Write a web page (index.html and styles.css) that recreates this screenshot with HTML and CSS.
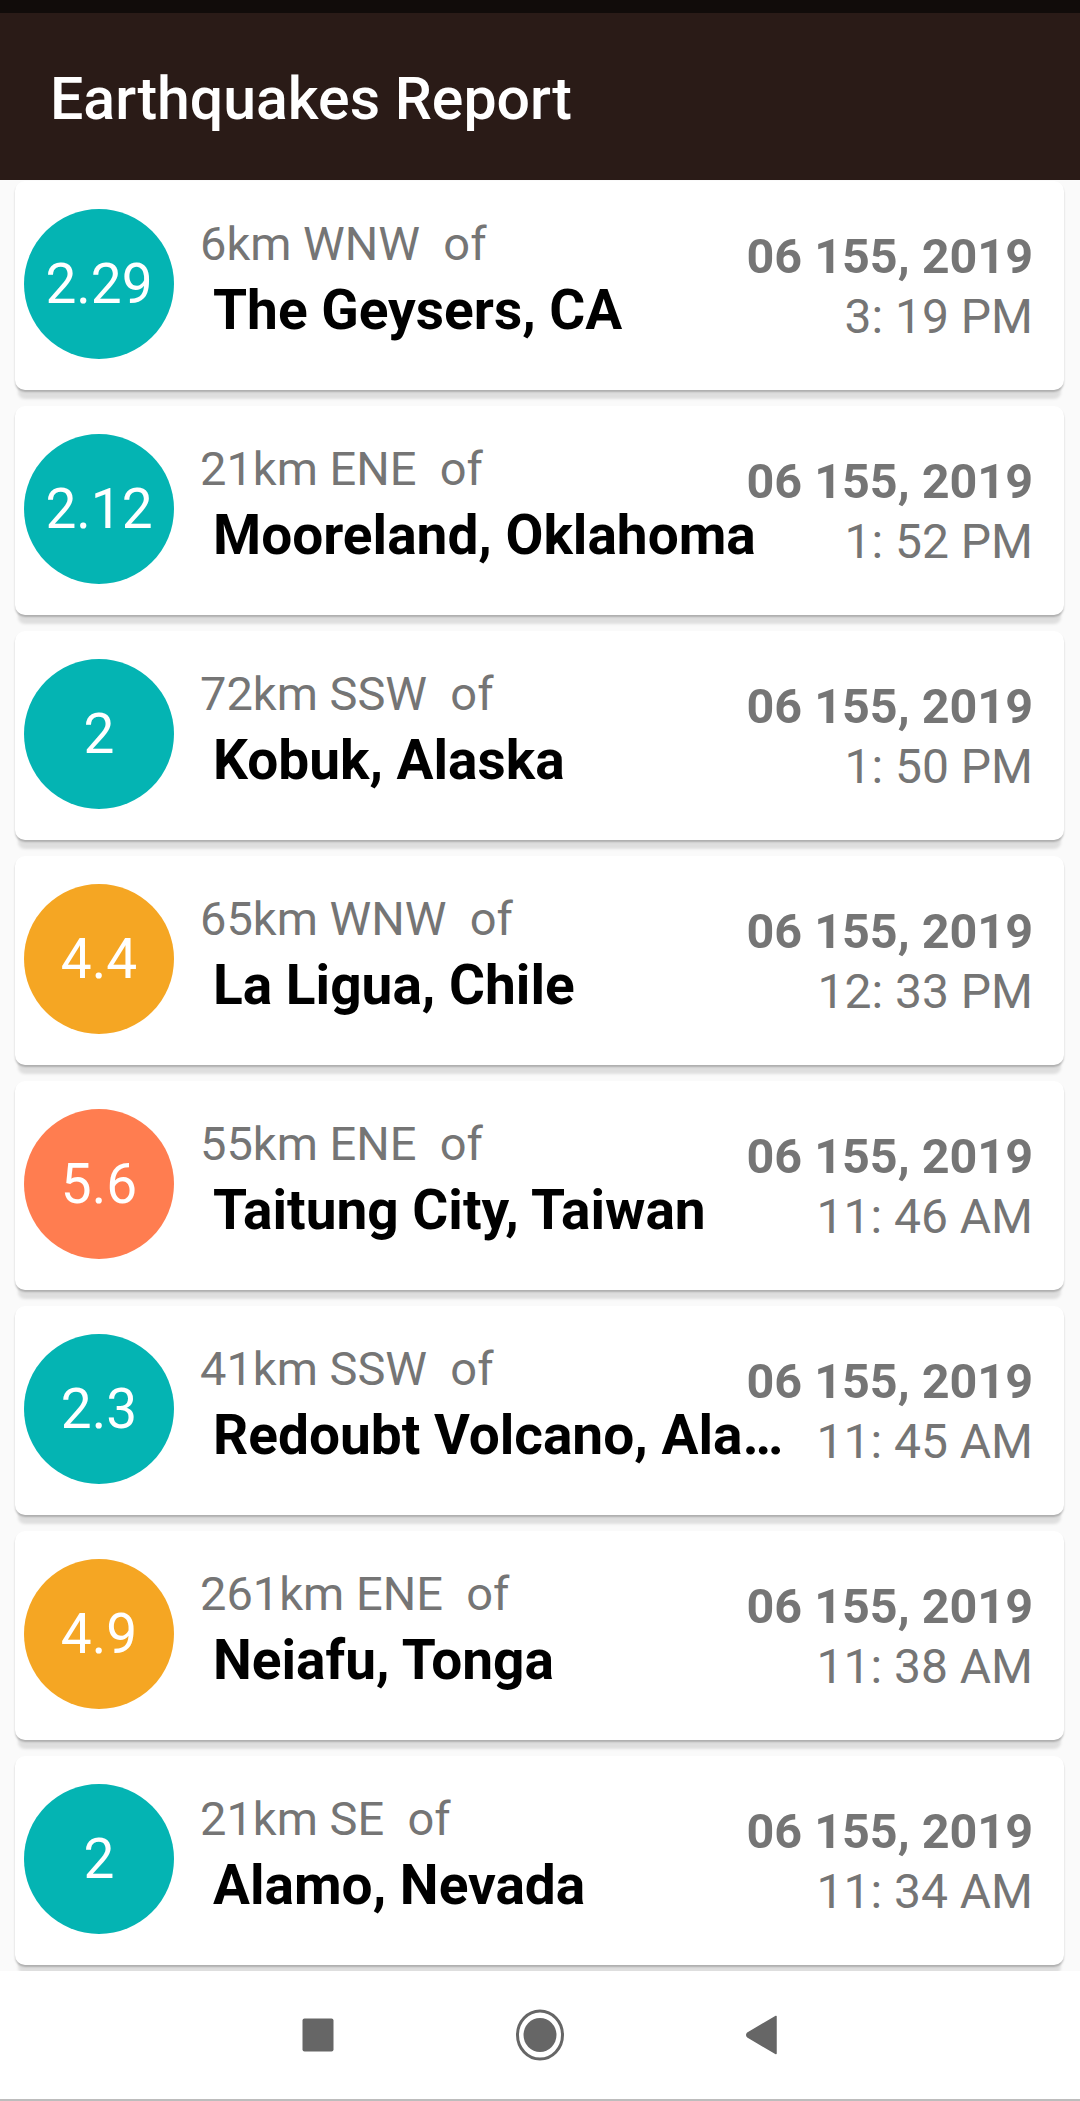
FILE: index.html
```html
<!DOCTYPE html>
<html>
<head>
<meta charset="utf-8">
<link rel="stylesheet" href="styles.css">
</head>
<body>
<div class="screen">
  <div class="statusbar"></div>
  <header class="toolbar"><h1 class="title">Earthquakes Report</h1></header>
  <main class="list">
    <div class="card">
      <div class="mag mag-teal">2.29</div>
      <div class="body">
        <div class="row1"><span class="offset">6km WNW&nbsp; of</span><span class="date">06 155, 2019</span></div>
        <div class="row2"><span class="primary">The Geysers, CA</span><span class="time">3: 19 PM</span></div>
      </div>
    </div>
    <div class="card">
      <div class="mag mag-teal">2.12</div>
      <div class="body">
        <div class="row1"><span class="offset">21km ENE&nbsp; of</span><span class="date">06 155, 2019</span></div>
        <div class="row2"><span class="primary">Mooreland, Oklahoma</span><span class="time">1: 52 PM</span></div>
      </div>
    </div>
    <div class="card">
      <div class="mag mag-teal">2</div>
      <div class="body">
        <div class="row1"><span class="offset">72km SSW&nbsp; of</span><span class="date">06 155, 2019</span></div>
        <div class="row2"><span class="primary">Kobuk, Alaska</span><span class="time">1: 50 PM</span></div>
      </div>
    </div>
    <div class="card">
      <div class="mag mag-orange">4.4</div>
      <div class="body">
        <div class="row1"><span class="offset">65km WNW&nbsp; of</span><span class="date">06 155, 2019</span></div>
        <div class="row2"><span class="primary">La Ligua, Chile</span><span class="time">12: 33 PM</span></div>
      </div>
    </div>
    <div class="card">
      <div class="mag mag-red">5.6</div>
      <div class="body">
        <div class="row1"><span class="offset">55km ENE&nbsp; of</span><span class="date">06 155, 2019</span></div>
        <div class="row2"><span class="primary">Taitung City, Taiwan</span><span class="time">11: 46 AM</span></div>
      </div>
    </div>
    <div class="card">
      <div class="mag mag-teal">2.3</div>
      <div class="body">
        <div class="row1"><span class="offset">41km SSW&nbsp; of</span><span class="date">06 155, 2019</span></div>
        <div class="row2"><span class="primary">Redoubt Volcano, Alaska</span><span class="time">11: 45 AM</span></div>
      </div>
    </div>
    <div class="card">
      <div class="mag mag-orange">4.9</div>
      <div class="body">
        <div class="row1"><span class="offset">261km ENE&nbsp; of</span><span class="date">06 155, 2019</span></div>
        <div class="row2"><span class="primary">Neiafu, Tonga</span><span class="time">11: 38 AM</span></div>
      </div>
    </div>
    <div class="card">
      <div class="mag mag-teal">2</div>
      <div class="body">
        <div class="row1"><span class="offset">21km SE&nbsp; of</span><span class="date">06 155, 2019</span></div>
        <div class="row2"><span class="primary">Alamo, Nevada</span><span class="time">11: 34 AM</span></div>
      </div>
    </div>
  </main>
  <nav class="navbar">
    <div class="navitem">
      <svg width="32" height="34" viewBox="0 0 32 34"><rect x="0.5" y="0.5" width="31" height="33" rx="2" fill="#666"/></svg>
    </div>
    <div class="navitem">
      <svg width="50" height="52" viewBox="0 0 50 52"><ellipse cx="25" cy="26" rx="22.5" ry="24" fill="none" stroke="#666" stroke-width="3"/><ellipse cx="25" cy="26" rx="16.5" ry="17" fill="#666"/></svg>
    </div>
    <div class="navitem">
      <svg width="34" height="40" viewBox="0 0 34 40"><path d="M31 1.5 L31 38.5 L3 22.2 Q0.5 20 3 17.8 Z" fill="#666" stroke="#666" stroke-width="1.5" stroke-linejoin="round"/></svg>
    </div>
  </nav>
</div>
</body>
</html>
```

FILE: styles.css
```css
* { box-sizing: border-box; }
html, body { margin: 0; padding: 0; }
body {
  width: 1080px;
  height: 2101px;
  overflow: hidden;
  font-family: Roboto, "Liberation Sans", sans-serif;
  background: #fafafa;
}
.screen {
  display: flex;
  flex-direction: column;
  height: 2101px;
}
.statusbar {
  height: 13px;
  background: #110c0a;
  flex-shrink: 0;
}
.toolbar {
  height: 167px;
  background: #2a1b17;
  display: flex;
  align-items: center;
  padding-left: 50px;
  flex-shrink: 0;
  position: relative;
  z-index: 2;
}
.title {
  margin: 0;
  color: #ffffff;
  font-size: 59px;
  font-weight: 500;
  line-height: 60px;
  padding-top: 4px;
  letter-spacing: 0;
}
.list {
  flex: 1;
  overflow: hidden;
  background: #fafafa;
  padding: 1px 16px 0 15px;
  display: flex;
  flex-direction: column;
  gap: 16px;
}
.card {
  height: 209px;
  flex-shrink: 0;
  background: #ffffff;
  border-radius: 10px;
  display: flex;
  align-items: flex-start;
  padding: 0 31px 0 9px;
  box-shadow: 0 2px 2px rgba(0,0,0,0.22), 0 12px 3px -3px rgba(0,0,0,0.11);
}
.mag {
  width: 150px;
  height: 150px;
  border-radius: 50%;
  margin-top: 28px;
  flex-shrink: 0;
  display: flex;
  align-items: center;
  justify-content: center;
  color: #ffffff;
  font-size: 55px;
  line-height: 1;
}
.mag-teal { background: #04b4b3; }
.mag-orange { background: #f5a623; }
.mag-red { background: #ff7d50; }
.body {
  flex: 1;
  min-width: 0;
  margin-left: 26px;
  padding-top: 35px;
  display: flex;
  flex-direction: column;
}
.row1 {
  display: flex;
  justify-content: space-between;
  align-items: flex-start;
  height: 71px;
}
.offset {
  font-size: 47px;
  line-height: 56px;
  color: #757575;
  white-space: nowrap;
}
.date {
  font-size: 48.5px;
  line-height: 60px;
  margin-top: 11px;
  font-weight: 700;
  color: #757575;
  white-space: nowrap;
}
.row2 {
  display: flex;
  justify-content: space-between;
  align-items: flex-start;
}
.primary {
  flex: 1;
  min-width: 0;
  padding-left: 13px;
  margin-top: -9px;
  font-size: 55px;
  line-height: 64px;
  font-weight: 700;
  color: #000000;
  white-space: nowrap;
  overflow: hidden;
  text-overflow: ellipsis;
}
.time {
  flex-shrink: 0;
  margin-left: 6px;
  font-size: 48px;
  line-height: 60px;
  color: #757575;
  white-space: nowrap;
}
.navbar {
  height: 130px;
  flex-shrink: 0;
  background: #ffffff;
  border-bottom: 2px solid #bdbdbd;
  display: flex;
  justify-content: center;
  align-items: center;
  position: relative;
  z-index: 2;
}
.navitem {
  width: 222px;
  display: flex;
  justify-content: center;
  align-items: center;
}
```
